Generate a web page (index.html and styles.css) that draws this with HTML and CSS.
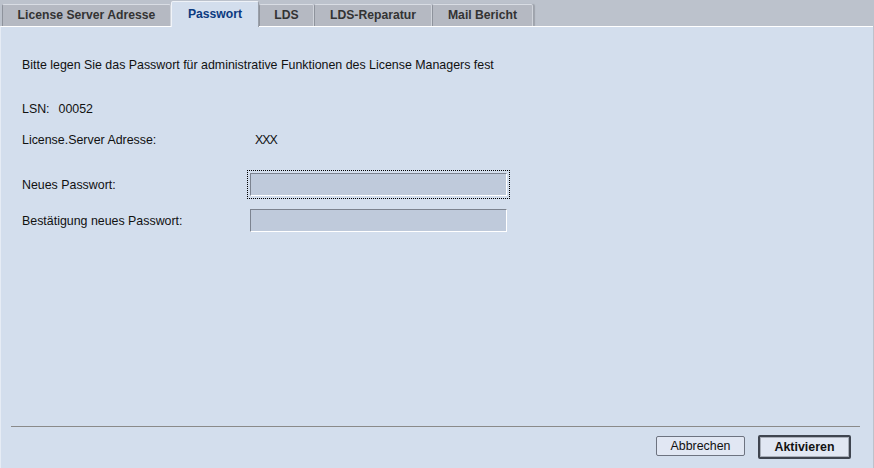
FILE: index.html
```html
<!DOCTYPE html>
<html lang="de">
<head>
    <meta charset="UTF-8">
    <title>License Manager - Passwort</title>
    <link rel="stylesheet" href="styles.css">
</head>
<body>
    <!-- Tab bar -->
    <div class="tabs">
        <div class="tab tab-first">License Server Adresse</div>
        <div class="tab active">Passwort</div>
        <div class="tab tab-lds">LDS</div>
        <div class="tab tab-rep">LDS-Reparatur</div>
        <div class="tab tab-mail">Mail Bericht</div>
    </div>

    <!-- Password panel -->
    <div class="panel">
        <div class="content">
            <p class="intro">Bitte legen Sie das Passwort für administrative Funktionen des License Managers fest</p>

            <p class="lsn">LSN:<span class="lsn-value">00052</span></p>

            <div class="row row-server">
                <span class="label">License.Server Adresse:</span>
                <span class="value">XXX</span>
            </div>

            <div class="row row-pw">
                <span class="label">Neues Passwort:</span>
                <span class="focus"><input class="field" type="password"></span>
            </div>

            <div class="row row-confirm">
                <span class="label">Bestätigung neues Passwort:</span>
                <input class="field" type="password">
            </div>
        </div>

        <div class="footer">
            <button class="btn">Abbrechen</button>
            <button class="btn btn-default">Aktivieren</button>
        </div>
    </div>
</body>
</html>
```

FILE: styles.css
```css
/* Reset */
* {
    margin: 0;
    padding: 0;
    box-sizing: border-box;
}

html, body {
    height: 100%;
}

body {
    font-family: 'Liberation Sans', Arial, sans-serif;
    font-size: 12px;
    color: #111;
    background: #bcc2cc;
    overflow: hidden;
    display: flex;
    flex-direction: column;
}

/* Tabs */
.tabs {
    display: flex;
    align-items: flex-end;
    height: 26px;
    padding-left: 2px;
    flex-shrink: 0;
}

.tab {
    height: 22px;
    line-height: 20px;
    text-align: center;
    font-weight: bold;
    font-size: 12.2px;
    color: #333;
    background: #b5b9c2;
    border-top: 1px solid #d9dde4;
    border-left: 1px solid #8e939c;
    border-right: 1px solid #d0d4db;
    border-top-left-radius: 2px;
    border-top-right-radius: 2px;
}

.tab-first { width: 169px; }
.tab-lds   { width: 55px; }
.tab-rep   { width: 118px; }

.tab-mail {
    width: 101px;
    box-shadow: 2px 0 1px #9ea3ac;
}

.tab.active {
    width: 88px;
    height: 26px;
    line-height: 24px;
    color: #0b3a80;
    background: #d3deed;
    border-top: 1px solid #eef2f8;
    border-left: 1px solid #f0f3f8;
    border-right: 1px solid #9aa0aa;
    margin-bottom: -1px;
    position: relative;
    z-index: 1;
}

/* Panel */
.panel {
    flex: 1;
    background: #d3deed;
    border-top: 1px solid #ffffff;
    border-left: 1px solid #e6ecf5;
    margin-right: 1px;
    display: flex;
    flex-direction: column;
}

.content {
    flex: 1;
    padding: 31px 0 0 21px;
    font-size: 12.4px;
}

.intro {
    line-height: 14px;
}

.lsn {
    margin-top: 30px;
    line-height: 14px;
}

.lsn-value {
    padding-left: 9px;
}

.row {
    display: flex;
    align-items: center;
}

.label {
    width: 228px;
    flex-shrink: 0;
}

.row-server {
    margin-top: 17px;
    line-height: 14px;
}

.row-server .value {
    padding-left: 5px;
    letter-spacing: -1px;
}

.row-pw {
    margin-top: 23px;
}

.focus {
    display: block;
    padding: 2px;
    border: 1px dotted #000;
    margin-left: -3px;
}

.field {
    display: block;
    width: 257px;
    height: 23px;
    background: #bfcadb;
    border: 1px solid #ffffff;
    border-top-color: #7c8390;
    border-left-color: #7c8390;
    outline: none;
}

.row-confirm {
    margin-top: 10px;
}

/* Button row */
.footer {
    height: 42px;
    margin: 0 13px 0 10px;
    border-top: 1px solid #8a8a8a;
    display: flex;
    justify-content: flex-end;
    align-items: flex-start;
    gap: 13px;
    padding: 8px 9px 0 0;
}

.btn {
    font-family: 'Liberation Sans', Arial, sans-serif;
    font-size: 12.4px;
    color: #111;
    background: #e1e7f3;
    border: 1px solid #6d7380;
    border-radius: 2px;
    width: 89px;
    height: 20px;
    margin-top: 1px;
}

.btn-default {
    font-weight: bold;
    width: 93px;
    height: 24px;
    margin-top: 0;
    border: 2px solid #3f4550;
    box-shadow: inset 0 0 0 1px #a9afba;
}
```
